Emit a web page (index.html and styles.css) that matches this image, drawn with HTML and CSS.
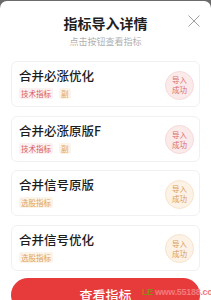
FILE: index.html
```html
<!DOCTYPE html>
<html lang="zh">
<head>
<meta charset="utf-8">
<link rel="stylesheet" href="styles.css">
</head>
<body>
<div class="sheet">
  <div class="header">
    <div class="title">指标导入详情</div>
    <div class="subtitle">点击按钮查看指标</div>
    <svg class="close" width="12" height="12" viewBox="0 0 12 12"><path d="M0.5 0.5L11.5 11.5M11.5 0.5L0.5 11.5" stroke="#a0a0a0" stroke-width="1" fill="none"/></svg>
  </div>
  <div class="list">
    <div class="card">
      <div class="info">
        <div class="name">合并必涨优化</div>
        <div class="tags"><span class="tag tag-red">技术指标</span><span class="tag tag-orange">副</span></div>
      </div>
      <div class="badge badge-red">导入<br>成功</div>
    </div>
    <div class="card">
      <div class="info">
        <div class="name">合并必涨原版F</div>
        <div class="tags"><span class="tag tag-red">技术指标</span><span class="tag tag-orange">副</span></div>
      </div>
      <div class="badge badge-red">导入<br>成功</div>
    </div>
    <div class="card">
      <div class="info">
        <div class="name">合并信号原版</div>
        <div class="tags"><span class="tag tag-orange">选股指标</span></div>
      </div>
      <div class="badge badge-orange">导入<br>成功</div>
    </div>
    <div class="card">
      <div class="info">
        <div class="name">合并信号优化</div>
        <div class="tags"><span class="tag tag-orange">选股指标</span></div>
      </div>
      <div class="badge badge-orange">导入<br>成功</div>
    </div>
  </div>
  <div class="btn">查看指标</div>
</div>
<div class="watermark"><span class="wm-le">LE</span>www.55188.com</div>
</body>
</html>
```
FILE: styles.css
```css
* { box-sizing: border-box; }
html, body {
  margin: 0;
  padding: 0;
  width: 211px;
  height: 300px;
  overflow: hidden;
  background: #6a6a6a;
  font-family: "Noto Sans CJK SC", "Noto Sans", sans-serif;
}
.sheet {
  margin-top: 1px;
  height: 299px;
  background: #fff;
  border-radius: 7px 7px 0 0;
  padding: 12px 11px 0 11px;
}
.header {
  position: relative;
  text-align: center;
}
.title {
  font-size: 14px;
  font-weight: 700;
  line-height: 20px;
  color: #1f1f1f;
}
.subtitle {
  margin-top: 2px;
  font-size: 9px;
  line-height: 14px;
  color: #b0b0b0;
}
.close {
  position: absolute;
  right: 0;
  top: 2px;
}
.list {
  margin-top: 12px;
  display: flex;
  flex-direction: column;
  gap: 8.5px;
}
.card {
  height: 46px;
  border: 1px solid #f1f1f1;
  border-radius: 6px;
  display: flex;
  align-items: center;
  justify-content: space-between;
  padding: 0 5px 0 7px;
}
.info {
  display: flex;
  flex-direction: column;
}
.name {
  font-size: 12.5px;
  font-weight: 500;
  line-height: 18px;
  color: #1d1d1d;
  margin-top: -2px;
}
.tags {
  display: flex;
  gap: 6px;
  margin-top: 3px;
}
.tag {
  font-size: 7.5px;
  line-height: 11px;
  padding: 0 2px;
  border-radius: 2px;
}
.tag-red { color: #d65c5c; background: #fdf0f0; }
.tag-orange { color: #e0a25a; background: #fdf4e9; }
.badge {
  width: 29px;
  height: 29px;
  border-radius: 50%;
  font-size: 7.5px;
  line-height: 10px;
  text-align: center;
  display: flex;
  align-items: center;
  justify-content: center;
  margin-top: 2px;
}
.badge-red { color: #d86d6d; background: #fbeaea; border: 1px solid #f6d9d9; }
.badge-orange { color: #d99b5c; background: #fdf2e6; border: 1px solid #f7e3cd; }
.btn {
  margin-top: 7.5px;
  height: 34px;
  border-radius: 17px;
  background: #e73b3b;
  color: #fff;
  font-size: 13px;
  font-weight: 500;
  display: flex;
  align-items: center;
  justify-content: center;
  padding-bottom: 2px;
}
.watermark {
  position: absolute;
  left: 142px;
  top: 287px;
  font-family: "Liberation Sans", sans-serif;
  font-size: 9px;
  font-weight: 700;
  color: #f27a7a;
  letter-spacing: -0.3px;
  white-space: nowrap;
}
.wm-le { color: #8d8a1c; margin-right: 2px; }
```
